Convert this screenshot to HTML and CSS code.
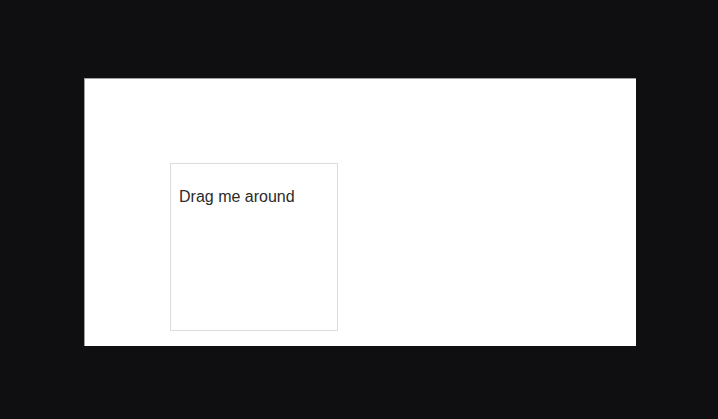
FILE: index.html
```html
<!DOCTYPE html>
<html>
<head>
<meta charset="utf-8">
<link rel="stylesheet" href="styles.css">
</head>
<body>
<div class="frame">
  <div class="draggable">
    <p class="label">Drag me around</p>
  </div>
</div>
</body>
</html>
```
FILE: styles.css
```css
html, body {
  margin: 0;
  padding: 0;
  background: #0f0e11;
}
body {
  padding: 78px 0 0 84px;
  height: 419px;
  box-sizing: border-box;
}
.frame {
  width: 552px;
  height: 268px;
  box-sizing: border-box;
  background: #ffffff;
  border-top: 1px solid #a0a0a0;
  border-left: 1px solid #a0a0a0;
  padding: 84px 0 0 85px;
}
.draggable {
  width: 168px;
  height: 168px;
  box-sizing: border-box;
  border: 1px solid #dcdcdc;
  padding: 0 8px;
  overflow: hidden;
}
.label {
  margin: 24px 0 0;
  font-family: "Liberation Sans", Arial, sans-serif;
  font-size: 16px;
  line-height: 18px;
  color: #2b2b2b;
}
```
